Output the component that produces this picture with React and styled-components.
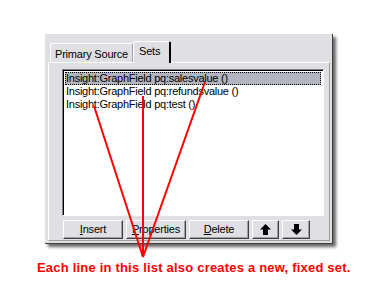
import React from "react";
import styled, { createGlobalStyle } from "styled-components";

const Global = createGlobalStyle`
  html, body { margin: 0; padding: 0; background: #ffffff; }
  body { font-family: "Liberation Sans", Arial, sans-serif; font-size: 11px; color: #000; }
`;

const Page = styled.div`
  position: relative;
  width: 374px;
  height: 288px;
  padding: 34px 0 0 45px;
  box-sizing: border-box;
`;

const Panel = styled.div`
  width: 288px;
  height: 210px;
  box-sizing: border-box;
  background: #e0dfe3;
  border-right: 1px solid #404040;
  border-bottom: 1px solid #404040;
  box-shadow: 3px 3px 3px rgba(0, 0, 0, 0.6);
  padding: 7px 2px 2px 3px;
  display: flex;
  flex-direction: column;
`;

const TabRow = styled.div`
  display: flex;
  align-items: flex-end;
  height: 21px;
  padding-left: 2px;
  position: relative;
  z-index: 1;
`;

const Tab = styled.div`
  box-sizing: border-box;
  height: ${(p) => (p.$active ? "22px" : "19px")};
  margin-bottom: ${(p) => (p.$active ? "-1px" : "0")};
  padding: ${(p) => (p.$active ? "2px 9px 0 5px" : "3px 4px 0 4px")};
  background: #e0dfe3;
  border-top: 1px solid #ffffff;
  border-left: 1px solid #ffffff;
  border-right: ${(p) => (p.$active ? "2px solid #000" : "1px solid #a0a0a0")};
  border-top-left-radius: 2px;
  border-top-right-radius: 2px;
  font-size: 11px;
  letter-spacing: -0.2px;
  line-height: 14px;
  white-space: nowrap;
`;

const TabBody = styled.div`
  flex: 1;
  box-sizing: border-box;
  border-top: 1px solid #ffffff;
  border-left: 1px solid #ffffff;
  border-right: 1px solid #a0a0a0;
  border-bottom: 1px solid #a0a0a0;
  padding: 6px 6px 1px 13px;
  display: flex;
  flex-direction: column;
  gap: 4px;
`;

const List = styled.div`
  width: 262px;
  height: 147px;
  box-sizing: border-box;
  background: #ffffff;
  border-top: 1px solid #808080;
  border-left: 1px solid #808080;
  border-right: 1px solid #ffffff;
  border-bottom: 1px solid #ffffff;
  box-shadow: inset 1px 1px 0 #000000;
  padding: 2px 2px 0 2px;
`;

const Row = styled.div`
  height: 13px;
  line-height: 13px;
  font-size: 11px;
  letter-spacing: -0.25px;
  padding-left: 1px;
  box-sizing: border-box;
  white-space: nowrap;
  background: ${(p) => (p.$selected ? "#b2b4bf" : "transparent")};
  outline: ${(p) => (p.$selected ? "1px dotted #000" : "none")};
  outline-offset: -1px;
`;

const Buttons = styled.div`
  display: flex;
  gap: 3px;
  padding-left: 1px;
`;

const Button = styled.div`
  box-sizing: border-box;
  width: ${(p) => p.$w}px;
  height: 19px;
  background: #e0dfe3;
  border-top: 1px solid #ffffff;
  border-left: 1px solid #ffffff;
  border-right: 1px solid #404040;
  border-bottom: 1px solid #404040;
  box-shadow: inset -1px -1px 0 #a0a0a0;
  display: flex;
  align-items: center;
  justify-content: center;
  font-size: 11px;
  letter-spacing: -0.2px;
  line-height: 14px;
  padding-bottom: 1px;
`;

const Key = styled.span`
  text-decoration: underline;
`;

const Caption = styled.div`
  position: absolute;
  left: 37px;
  top: 260px;
  color: #ff0000;
  font-weight: bold;
  font-size: 13px;
  letter-spacing: 0.2px;
  white-space: nowrap;
`;

const Overlay = styled.svg`
  position: absolute;
  left: 0;
  top: 0;
  pointer-events: none;
`;

const Arrow = ({ up }) => (
  <svg width="11" height="11" viewBox="0 0 11 11">
    {up ? (
      <path d="M5.5 0 L11 5.5 L8 5.5 L8 11 L3 11 L3 5.5 L0 5.5 Z" fill="#000" />
    ) : (
      <path d="M5.5 11 L11 5.5 L8 5.5 L8 0 L3 0 L3 5.5 L0 5.5 Z" fill="#000" />
    )}
  </svg>
);

export default function App() {
  return (
    <>
      <Global />
      <Page>
        <Panel>
          <TabRow>
            <Tab>Primary Source</Tab>
            <Tab $active>Sets</Tab>
          </TabRow>
          <TabBody>
            <List>
              <Row $selected>Insight:GraphField pq:salesvalue ()</Row>
              <Row>Insight:GraphField pq:refundsvalue ()</Row>
              <Row>Insight:GraphField pq:test ()</Row>
            </List>
            <Buttons>
              <Button $w={60}><span><Key>I</Key>nsert</span></Button>
              <Button $w={60}><span><Key>P</Key>roperties</span></Button>
              <Button $w={60}><span><Key>D</Key>elete</span></Button>
              <Button $w={27}><Arrow up /></Button>
              <Button $w={28}><Arrow /></Button>
            </Buttons>
          </TabBody>
        </Panel>
        <Overlay width="374" height="288" viewBox="0 0 374 288">
          <g stroke="#ff0000" strokeWidth="2" fill="none" strokeLinecap="butt">
            <line x1="94" y1="106" x2="143" y2="257" />
            <line x1="143" y1="96" x2="143" y2="257" />
            <line x1="205" y1="82" x2="143" y2="257" />
          </g>
        </Overlay>
        <Caption>Each line in this list also creates a new, fixed set.</Caption>
      </Page>
    </>
  );
}
